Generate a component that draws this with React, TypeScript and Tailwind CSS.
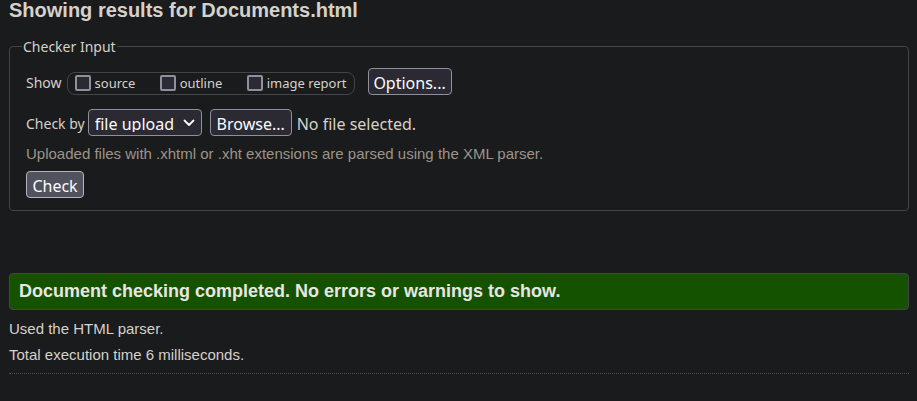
import { useRef, useState } from "react";
import type { ReactNode } from "react";

const sans = "font-['Noto_Sans',sans-serif]";
const control =
  "h-[27px] rounded border border-[#8f8f9d] bg-[#2b2a33] pt-0.5 text-base leading-none text-[#fbfbfe]";

function Option({ id, children }: { id: string; children: ReactNode }) {
  return (
    <span className="flex items-center gap-1">
      <input
        id={id}
        type="checkbox"
        className="mb-0.5 size-4 appearance-none rounded-xs border-2 border-[#8f8f9d] bg-[#2b2a33] checked:bg-[#00ddff]"
      />
      <label htmlFor={id} className="text-[13px]">
        {children}
      </label>
    </span>
  );
}

export default function App() {
  const picker = useRef<HTMLInputElement>(null);
  const [fileName, setFileName] = useState("No file selected.");

  return (
    <main className="min-h-screen bg-[#1a1b1d] pr-2 pb-6 pl-[9px] font-['Liberation_Sans',Arial,sans-serif] text-[15px] text-[#d5d1cb]">
      <h1 className="h-9 text-xl leading-5 font-bold">Showing results for Documents.html</h1>

      <form onSubmit={(event) => event.preventDefault()}>
        <fieldset className={`rounded border border-[#414548] px-4 pb-3 ${sans}`}>
          <legend className="-ml-1 h-5 px-px text-sm leading-[22px]">Checker Input</legend>

          <div className="flex items-end gap-[5px] pt-3">
            <span className="text-sm leading-6">Show</span>
            <div className="mr-2 flex h-[23px] w-[288px] items-center justify-between rounded-lg border border-[#414548] px-[7px]">
              <Option id="source">source</Option>
              <Option id="outline">outline</Option>
              <Option id="image-report">image report</Option>
            </div>
            <button type="button" className={`w-[84px] ${control}`}>
              Options...
            </button>
          </div>

          <div className="flex items-center pt-[14px]">
            <label htmlFor="method" className="pt-0.5 pr-[3px] text-sm">
              Check by
            </label>
            <span className="mr-2 grid items-center">
              <select
                id="method"
                className={`col-start-1 row-start-1 w-[114px] appearance-none pr-6 pl-1.5 ${control}`}
              >
                <option>file upload</option>
                <option>address</option>
                <option>text input</option>
              </select>
              <svg
                aria-hidden="true"
                viewBox="0 0 12 8"
                className="pointer-events-none col-start-1 row-start-1 mr-[7px] h-2 w-3 justify-self-end"
              >
                <path
                  d="M1.5 1.5 6 6l4.500-4.500"
                  fill="none"
                  stroke="#fbfbfe"
                  strokeWidth="1.800"
                  strokeLinecap="round"
                  strokeLinejoin="round"
                />
              </svg>
            </span>
            <input
              ref={picker}
              type="file"
              aria-label="File to check"
              className="hidden"
              onChange={(event) => setFileName(event.target.files?.[0]?.name ?? "No file selected.")}
            />
            <button
              type="button"
              className={`mr-[5px] w-[82px] ${control}`}
              onClick={() => picker.current?.click()}
            >
              Browse...
            </button>
            <span className="pt-0.5 text-base leading-none">{fileName}</span>
          </div>

          <p className="pt-2 pb-[7px] font-['Liberation_Sans',Arial,sans-serif] text-[15px] leading-5 text-[#9d9488]">
            Uploaded files with .xhtml or .xht extensions are parsed using the XML parser.
          </p>
          <button
            type="submit"
            className="block h-[27px] w-[58px] rounded border border-[#b5b3bb] bg-[#52525e] pt-0.5 text-base leading-none text-[#fbfbfe]"
          >
            Check
          </button>
        </fieldset>
      </form>

      <section className="mt-[62px] border-b border-dotted border-[#4b4f52] pb-[5px]">
        <p className="mb-1.5 rounded border border-[#414548] bg-[#145200] px-[9px] py-1 text-lg leading-[27px] font-bold text-[#e8e6e3]">
          Document checking completed. No errors or warnings to show.
        </p>
        <p className="leading-[26px]">Used the HTML parser.</p>
        <p className="leading-[26px]">Total execution time 6 milliseconds.</p>
      </section>
    </main>
  );
}
